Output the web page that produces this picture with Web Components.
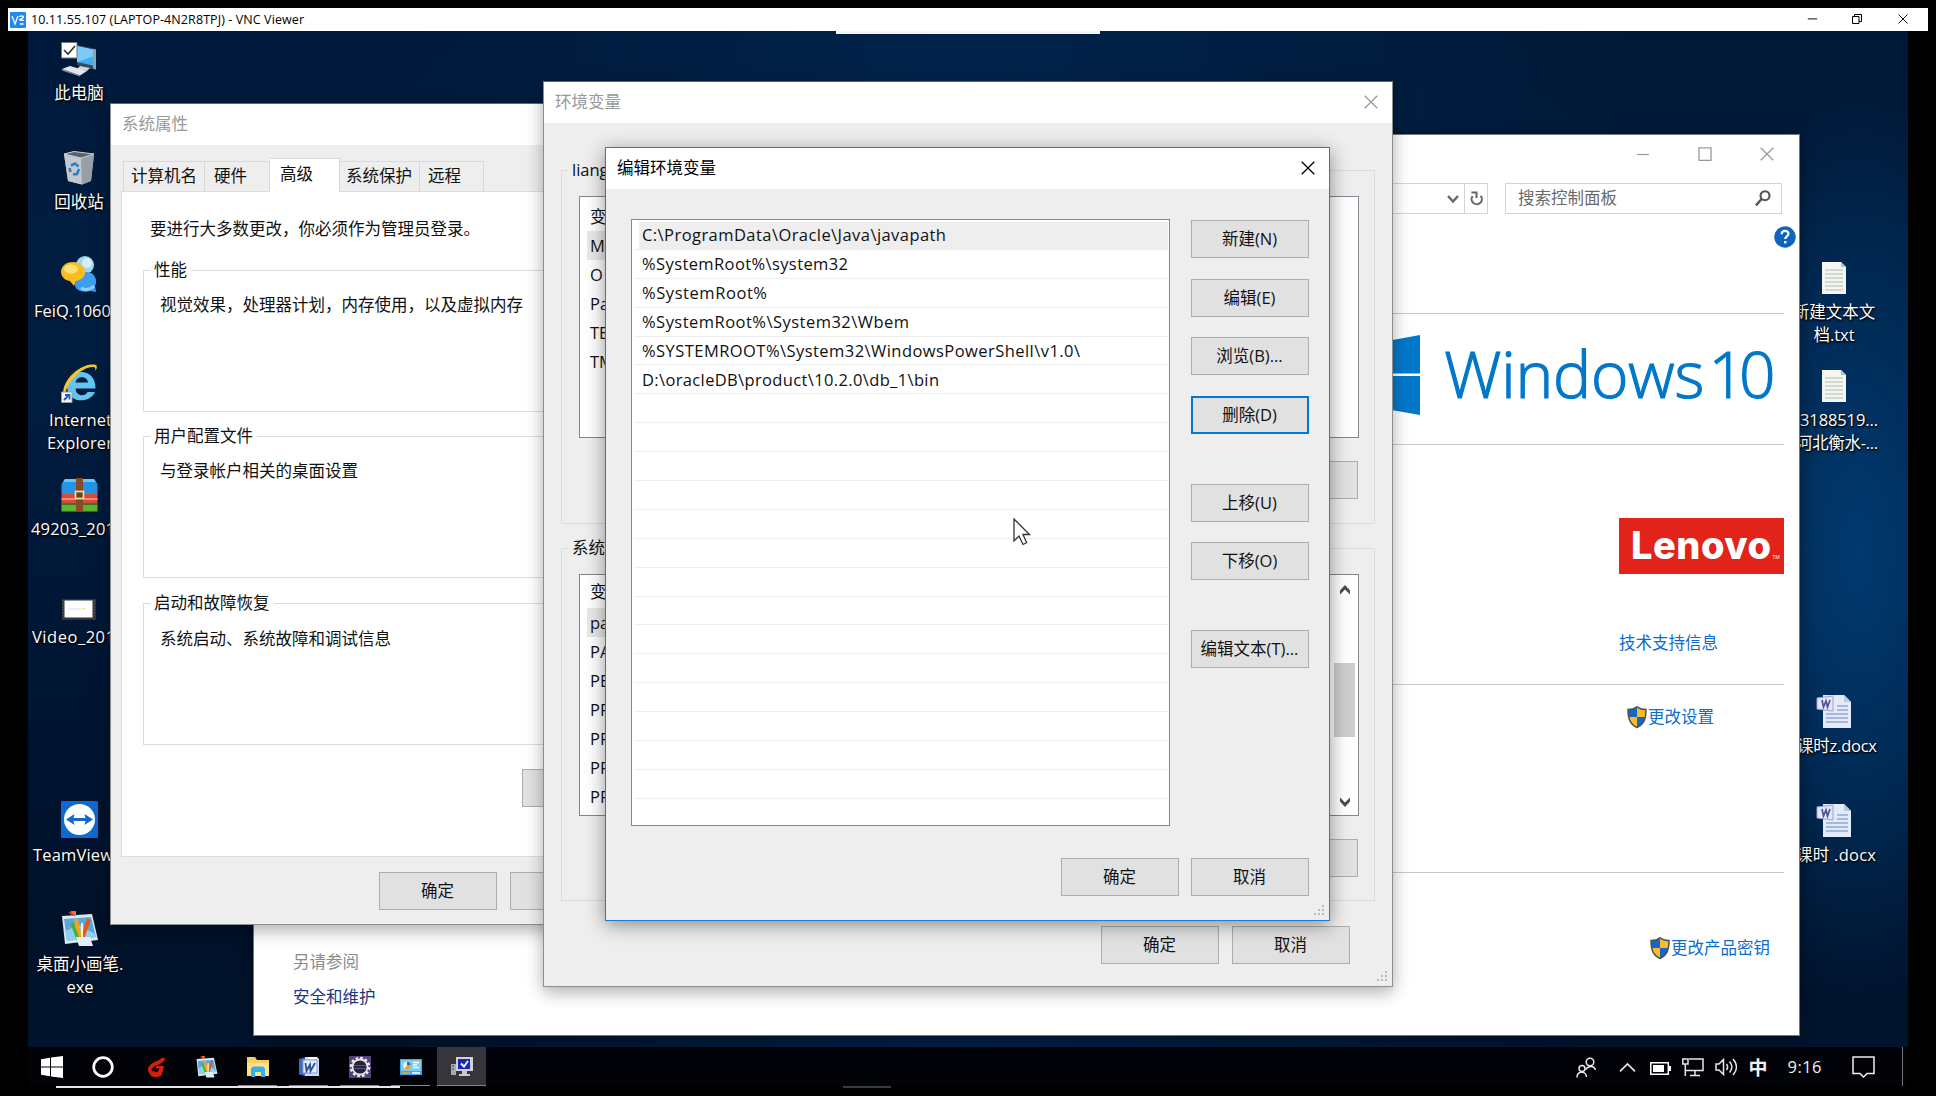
<!DOCTYPE html>
<html lang="zh-CN">
<head>
<meta charset="utf-8">
<title>VNC Viewer</title>
<style>
html,body{margin:0;padding:0;background:#000;overflow:hidden}
body{font:16.5px/24px "Open Sans","Noto Sans CJK SC",sans-serif;color:#111;width:1936px;height:1096px}
</style>
</head>
<body>
<vnc-screen></vnc-screen>
<script>
const def=(name,html,init)=>{
  const t=document.createElement('template');t.innerHTML=html;
  customElements.define(name,class extends HTMLElement{
    constructor(){super();this.attachShadow({mode:'open'}).append(t.content.cloneNode(true));}
    connectedCallback(){init&&init.call(this,this.shadowRoot);}
  });
};

/* Icon artwork, keyed by name: [viewBox, markup] */
const paint='<path d="M1 5l30 -2 6 26-33 4z" fill="#dbe9f2"/><path d="M3 8l27-2 5 20-29 4z" fill="#5aa7dc"/><path d="M4 20l14-6 16 9 1 3-29 4z" fill="#8fd0f0"/><path d="M10 0h5v5h-5z" fill="#e8762c"/><path d="M8 1l4 3" stroke="#c33" stroke-width="2"/><path d="M15 8l4 20" stroke="#f3a31c" stroke-width="4"/><path d="M11 12l6 16" stroke="#4fae3a" stroke-width="3.5"/><path d="M28 8l-7 20" stroke="#e35a20" stroke-width="4"/><path d="M21 12l0 14" stroke="#fff2c8" stroke-width="2"/><path d="M15 26h14l3 9H18z" fill="#dfeef8"/>';
const wdoc='<path d="M6 1h21l7 7v26H6z" fill="#e3ebfa"/><path d="M27 1v7h7z" fill="#b9c9e6"/><path d="M20 12h11M20 16h11M9 20h22M9 24h22M9 28h22" stroke="#93a8d4" stroke-width="1.3"/><path d="M0 4l16-2v15L0 15z" fill="#e4e6f5" stroke="#9aa2cf"/><path d="M5 6l1.500 7 2.500-6 1.500 6 2.500-7" fill="none" stroke="#4d559c" stroke-width="1.700"/>';
const shield='<path d="M10 .8C7 3 4 3.6 1 3.6 1 12 2.500 18 10 21.500 17.500 18 19 12 19 3.600 16 3.600 13 3 10 .8z" fill="#f9bb2d"/><path d="M10 1.500V11H1.500C1 9 1 6 1 3.600 4 3.600 7 3 10 1.500zM10 11h8.500C17.500 16 15 19 10 21.500z" fill="#1468c4"/><path d="M10 .8C7 3 4 3.600 1 3.600 1 12 2.500 18 10 21.500 17.500 18 19 12 19 3.600 16 3.600 13 3 10 .8z" fill="none" stroke="#4d5252" stroke-width="1.500"/>';
const txt='<path d="M1 1h19l5 5v27H1z" fill="#f4f6f4"/><path d="M20 1l0 5h5z" fill="#a9c4d8"/><path d="M4 9h18M4 13h18M4 17h18M4 21h18M4 25h18M4 29h18" stroke="#b5b7b0" stroke-width="1.200"/>';
const ICONS={
  vnc:['0 0 16 16','<rect width="16" height="16" rx="1" fill="#2089f2"/><path d="M2 4l3 8 3-8M9.500 5c0-1.500 4-1.500 4 0s-4 1.500-4 3M9.500 8.500c1-1 4-.5 4 .5M10 12h3.500" fill="none" stroke="#fff" stroke-width="1.300"/>'],
  min:['0 0 14 14','<path d="M1 7.500h12" stroke="currentColor" stroke-width="1.200"/>'],
  max:['0 0 14 14','<path d="M1 .8h12v12.600H1z" fill="none" stroke="currentColor" stroke-width="1.300"/>'],
  restore:['0 0 10 10','<path d="M.5 2.500h6.500v7H.5zM2.500 2.500v-2h7v7H7" fill="none" stroke="currentColor"/>'],
  close:['0 0 14 14','<path d="M.7 .7l12.600 12.600M13.300 .7L.7 13.300" stroke="currentColor" stroke-width="1.300"/>'],
  grip:['0 0 13 13','<path d="M10 1h2v2h-2zM10 5h2v2h-2zM6 5h2v2H6zM10 9h2v2h-2zM6 9h2v2H6zM2 9h2v2H2z" fill="#bdbdbd"/>'],
  up:['0 0 12 10','<path d="M1 9.500V5.500l5-5.500 5 5.500v4L6 4.500z" fill="#4c4c4c"/>'],
  down:['0 0 12 10','<path d="M1 .5v4l5 5.500 5-5.500v-4L6 5.500z" fill="#4c4c4c"/>'],
  chev:['0 0 12 8','<path d="M1 1l5 5.500L11 1" fill="none" stroke="#666" stroke-width="2.400"/>'],
  refresh:['0 0 14 16','<path d="M2.800 5.500A5.500 5.500 0 1 0 11.500 5.200" fill="none" stroke="#666" stroke-width="2.200"/><path d="M1.500 1.500h5.500v6" fill="none" stroke="#666" stroke-width="2.200"/>'],
  search:['0 0 16 16','<circle cx="10" cy="5.700" r="4.500" fill="none" stroke="#555" stroke-width="2.100"/><path d="M6.600 9L1 15.300" stroke="#555" stroke-width="2.500"/>'],
  help:['0 0 22 22','<circle cx="11" cy="11" r="10.700" fill="#0f65bd"/><path d="M7.700 8.300c0-4.600 6.800-4.300 6.800-.5 0 2.500-3.300 2.600-3.300 5.200" fill="none" stroke="#fff" stroke-width="2.200"/><path d="M10 15h2.400v2.400H10z" fill="#fff"/>'],
  flag:['0 0 74 80','<path d="M0 12L34 7.200V38H0zM37 6.800L74 0v38.500H37zM0 41h34v31.800L0 68zM37 41h37v39l-37-6.500z" fill="#0078c9"/>'],
  shield:['0 0 20 22',shield],
  cursor:['0 0 18 28','<path d="M1 1v22l5-5 4 8.500 3.600-1.700L10 16.500h6.500z" fill="#fff" stroke="#33333d" stroke-width="1.300"/>'],
  pc:['0 0 37 34','<path d="M16 3l19 4v21l-19-5z" fill="#3a4a58"/><path d="M16 4l16 3.500v16L16 20z" fill="#42aef0"/><path d="M16 4l16 3.500v7L16 20z" fill="#7ccbf8"/><path d="M32 7l3 .5v20l-3-1z" fill="#8fa3b3"/><path d="M19 24l10 2-3 3-10-2z" fill="#cdd6dd"/><path d="M1 27l8-3 17 5-7 4.500z" fill="#e3e6e8"/><path d="M1 27l18 6.500v1L1 28.500z" fill="#8c949a"/><path d="M.5.500h15.500v15.500H.5z" fill="#fff" stroke="#777"/><path d="M3 8l4 4L14 4" fill="none" stroke="#333" stroke-width="1.600"/>'],
  bin:['0 0 32 34','<path d="M1 3l10-2.500 20 2.500-3 27-9 3.500L5 30z" fill="#b4bcc3"/><path d="M1 3l17 4 1 26.500L5 30z" fill="#c3c9ce"/><path d="M18 7l13-4-3 27-9 3.500z" fill="#989fa6"/><path d="M1 3l10-2.500L31 3 18 7z" fill="#58636c" stroke="#c9cfd3" stroke-width="1"/><path d="M8 14.500l4-2 3.500 3M16 18l-2 5-4 .500M7.500 21l-1-4" fill="none" stroke="#2c7fc8" stroke-width="2.600"/>'],
  feiq:['0 0 38 38','<circle cx="25" cy="9" r="9" fill="#9ed7f6"/><circle cx="27" cy="7" r="5" fill="#d3effc"/><path d="M27 16c8 0 11 9 8 14l1 6-6-1c-8 2-15-1-15-6s4-13 12-13z" fill="#3f9df0"/><path d="M21 32c5 3 10 1 13-2" stroke="#8fd0fa" stroke-width="3" fill="none"/><path d="M13 6C5 6 1 11 1 16s5 9 9 9l4 5 2-5c5-1 9-4 9-9S20 6 13 6z" fill="#fbbd1e"/><ellipse cx="11" cy="13" rx="7" ry="4.500" fill="#fde27a"/>'],
  ie:['0 0 37 40','<path d="M34.500 25.500H14.500c.5 8 9.500 8.500 12 3.500h7.500C28 42 5 40 6 22 7 5 35 3 34.500 25.500zM14.500 19.500H27c-.7-7-11.500-7-12.500 0z" fill="#63c4f2"/><path d="M3 33C-2 20 20-2 35 2c2 2 0 5-1 6 1-3 0-4-2-4C22 3 5 19 4 33z" fill="#f5c62a"/><path d="M.5 29h10.500v10.500H.5z" fill="#f6f6f6" stroke="#999"/><path d="M3 37l4-4M4 32h4.500v4.500" fill="none" stroke="#1f5fb5" stroke-width="1.800"/>'],
  rar:['0 0 37 34','<path d="M4 1h29l3.500 5v10H.5V6z" fill="#2196e3"/><path d="M4 1h29l2 3H2z" fill="#6cc5f5"/><path d="M.5 16h36v9H.5z" fill="#d94a3a"/><path d="M.5 20h36v2H.5z" fill="#f08a70"/><path d="M.5 25h36v8.500H.5z" fill="#5cb531"/><path d="M.5 25h36v2H.5z" fill="#2f7d1e"/><path d="M15 0h7v33.500h-7z" fill="#8c4a24"/><rect x="14.500" y="13.500" width="8" height="7" fill="#5e4a28" stroke="#f2dfa0" stroke-width="1.700"/>'],
  video:['0 0 34 21','<path d="M0 0h34v21H0z" fill="#333"/><path d="M2.500 1.500h28v17h-28z" fill="#fff"/><path d="M6 10h13" stroke="#eee4f0" stroke-width="1.500"/><path d="M20 9.500h3" stroke="#f2e48a" stroke-width="1.500"/><path d="M32 1v19M1 1v19" stroke="#666" stroke-dasharray="1.500 1.500"/>'],
  tv:['0 0 37 37','<rect width="37" height="37" rx="1.500" fill="#0c6bd0"/><circle cx="18.500" cy="18.500" r="15.500" fill="#fff"/><path d="M5 18.500l8.500-5.500-1 4h12l-1-4 8.500 5.500-8.500 5.500 1-4h-12l1 4z" fill="#1169cc"/>'],
  paint:['0 0 38 36',paint],
  txt:['0 0 26 34',txt],
  wdoc:['0 0 35 35',wdoc],
  start:['0 0 22 22','<path d="M0 3.200l9-1.400v8.700H0zM10 1.600L22 0v10.500H10zM0 11.500h9v8.700l-9-1.400zM10 11.500h12V22l-12-1.600z" fill="#fff"/>'],
  cortana:['0 0 22 22','<circle cx="11" cy="11" r="9.300" fill="none" stroke="#fff" stroke-width="2.700"/>'],
  g:['0 0 20 22','<path d="M18.500 1C17 7 4.500 6 4 13.500c-.3 5.500 9.500 5.500 12 .5l.5-2.500h-6" fill="none" stroke="#d81e06" stroke-width="4"/><path d="M10 12h8l-1.500 7c-3 2.500-10 2.500-12 0z" fill="#d81e06"/><path d="M9 12.500c2-1 4-1 5-.5-.5 3-2 4-5 4z" fill="#000"/>'],
  folder:['0 0 22 20','<path d="M0 0h8l2 3h12v16H0z" fill="#f8cf5f"/><path d="M0 6h22v13H0z" fill="#fde28d"/><path d="M4 20v-8.500l2-2h10l2 2V20h-4v-5H8v5z" fill="#35b0e6"/>'],
  word:['0 0 20 20','<path d="M6 0h12l2 2v17H6z" fill="#cfdcf2"/><path d="M9 0h9v2H9z" fill="#fff"/><path d="M0 2l6-1.500V19l-6-1.500z" fill="#3f6cb8"/><path d="M4 3h14v13H4z" fill="#e9effa" stroke="#7d9dd4"/><path d="M6.500 6l1 8 3.500-6.500.500 6.500L16 6" fill="none" stroke="#2b569a" stroke-width="1.900"/>'],
  gear:['0 0 22 22','<path d="M0 0h22v22H0z" fill="#54407a"/><circle cx="11" cy="11" r="8.800" fill="none" stroke="#eee" stroke-width="3" stroke-dasharray="2.600 2"/><circle cx="11" cy="11" r="7.500" fill="#262338" stroke="#e3e1e8" stroke-width="1.800"/><path d="M5 9.500h12M5 12.500h12" stroke="#5d5288" stroke-width="1"/>'],
  panel:['0 0 22 16','<path d="M0 0h22v16H0z" fill="#3fa9e8"/><path d="M1 1h20v11H1z" fill="#7dcaf3"/><circle cx="7" cy="6.500" r="3.700" fill="#f6f6f6"/><path d="M7 6.500V2.800a3.700 3.700 0 0 1 3.700 3.700z" fill="#1b6fb5"/><path d="M7 6.500h3.700a3.700 3.700 0 0 1-6 3z" fill="#f39b1d"/><path d="M13 3.500h6M13 6h4M13 8.500h6" stroke="#fff" stroke-width="1.500"/><path d="M2 14h8" stroke="#f6a623" stroke-width="1.500"/><path d="M12 14h8" stroke="#fff" stroke-width="1.500"/>'],
  mypc:['0 0 22 20','<path d="M0 7h5v11H0z" fill="#a9adb2"/><path d="M1 9h2M1 12h2" stroke="#444"/><path d="M5 0h17v14H5z" fill="#cfd2d6"/><path d="M7 2h12v10H7z" fill="#1a28c0"/><path d="M10 6.500l3 3L17 4" fill="none" stroke="#fff" stroke-width="1.800"/><path d="M11 14h5v3h3v2H8v-2h3z" fill="#c5c8cc"/>'],
  people:['0 0 20 21','<g fill="none" stroke="#e8e8e8" stroke-width="1.500"><circle cx="14" cy="5" r="3.800"/><circle cx="6" cy="11.500" r="3"/><path d="M1 20.500c0-7 9-7 9.500-.500M9.500 12.500c3-4 8.500-4.500 10 .500"/></g>'],
  tup:['0 0 17 9','<path d="M1 8.300L8.500 1 16 8.300" fill="none" stroke="#e8e8e8" stroke-width="1.700"/>'],
  batt:['0 0 21 13','<path d="M.8.800h17.500v11.400H.8z" fill="none" stroke="#fff" stroke-width="1.500"/><path d="M3 3h11v7H3z" fill="#fff"/><path d="M19 4h2v5h-2z" fill="#fff"/>'],
  net:['0 0 22 19','<g fill="none" stroke="#e8e8e8" stroke-width="1.500"><path d="M7 1h14v11.500H4M13 12.500V17M8 17.500h10M.8 1H6v5H.8zM3.300 6v12"/></g>'],
  vol:['0 0 23 20','<g fill="none" stroke="#e8e8e8" stroke-width="1.500"><path d="M1 7h3l4.500-4.500v15L4 13H1zM11.500 7c1.500 2 1.500 4 0 6M14.500 4.500c3 3.500 3 7.500 0 11M18 2c4.500 5 4.500 11 0 16"/></g>'],
  note:['0 0 23 23','<path d="M1 1h21v16.500h-7L11.500 21 8 17.500H1z" fill="none" stroke="#f0f0f0" stroke-width="1.500"/>']
};

def('ui-icon','',function(r){
  const [vb,m]=ICONS[this.getAttribute('name')];const s=vb.split(' ');
  const w=this.getAttribute('w')||s[2],h=this.getAttribute('h')||s[3];
  r.innerHTML=`<style>:host{display:block;flex:none;width:${w}px;height:${h}px}svg{display:block;overflow:visible}</style><svg width="${w}" height="${h}" viewBox="${vb}" preserveAspectRatio="none">${m}</svg>`;
});

/* A single line of text whose tracking is adjusted to fill the width in "w". */
def('ui-text','<style>:host{display:block;width:max-content;white-space:pre;height:24px;line-height:24px;flex:none}</style><slot></slot>',function(){
  const w=+this.getAttribute('w');if(!w)return;
  const n=[...this.textContent].length,nat=this.getBoundingClientRect().width;
  this.style.letterSpacing=((w-nat)/Math.max(1,n-1))+'px';
});

def('ui-button','<style>:host{display:flex;box-sizing:border-box;width:118px;height:38px;flex:none;align-items:center;justify-content:center;background:#e1e1e1;border:1px solid #adadad;color:#111;padding:0 1px 1px 0}:host([focused]){border:2px solid #0078d7}</style><slot></slot>');

def('win-frame',`<style>
:host{display:flex;flex-direction:column;box-sizing:border-box;position:absolute;background:#eee;border:1px solid #8d8d8d;border-top-color:#5d6670;box-shadow:0 5px 16px rgba(0,0,0,.33)}
:host([active]){border-color:#1a7fd4;box-shadow:0 4px 18px rgba(0,0,0,.42)}
header{height:41px;box-sizing:border-box;flex:none;background:#fff;display:flex;align-items:center;justify-content:space-between;padding:0 14px 2px 11px;color:#999}
:host([active]) header{color:#000;padding-right:14px}
ui-icon{color:#999}:host([active]) ui-icon{color:#000}
main{flex:1;display:flex;flex-direction:column;min-height:0}
.grip{position:absolute;right:4px;bottom:3px}
</style><header><ui-text></ui-text><ui-icon name="close"></ui-icon></header><main><slot></slot></main><ui-icon class="grip" name="grip"></ui-icon>`,function(r){
  r.querySelector('ui-text').textContent=this.getAttribute('heading');
});

def('group-box',`<style>:host{display:flex;flex-direction:column;box-sizing:border-box;border:1px solid #dcdcdc;flex:none}
.l{margin:-13px 0 0 6px;padding:0 4px;background:var(--bg,#fff);width:max-content;height:24px}</style><div class="l"><ui-text></ui-text></div><slot></slot>`,function(r){
  r.querySelector('ui-text').textContent=this.getAttribute('legend');
});

def('var-list',`<style>:host{display:flex;box-sizing:border-box;border:1px solid #828790;background:#fff;overflow:hidden;flex:none}
.rows{flex:1;padding-left:7px}.r{height:29px;display:flex;align-items:center;padding-left:3px}.sel{background:#e9e9e9;width:300px}
.h{margin-bottom:var(--hgap,0)}
.sb{display:none;width:21px;flex-direction:column;align-items:center;margin-right:3px}:host([scroll]) .sb{display:flex}
.t{width:21px;height:74px;background:#cdcdcd;margin-top:calc(62px - var(--pt,0px))}.a{height:26px;display:flex;align-items:center}.a.d{margin-top:auto}
</style><div class="rows"></div><div class="sb"><div class="a" style="margin-top:-1px;height:27px"><ui-icon name="up" w="12" h="10"></ui-icon></div><div class="t"></div><div class="a d"><ui-icon name="down" w="12" h="10"></ui-icon></div></div>`,function(r){
  r.querySelector('.rows').innerHTML=this.getAttribute('rows').split(',').map((s,i)=>`<div class="r ${i==0?'h':i==1?'sel':''}"><ui-text>${s}</ui-text></div>`).join('');
});

def('sys-window',`<style>
:host{display:flex;flex-direction:column;box-sizing:border-box;position:absolute;left:253px;top:134px;width:1547px;height:902px;background:#fff;border:1px solid #6f7880;box-shadow:0 4px 14px rgba(0,0,0,.4)}
.cap{display:flex;justify-content:flex-end;height:38px;padding:0 1px 1px 0;box-sizing:border-box;color:#999;flex:none}.cap div{width:62px;display:flex;align-items:center;justify-content:center}
.addr{display:flex;justify-content:flex-end;gap:17px;margin-top:10px;height:31px;padding-right:17px;flex:none}
.box{box-sizing:border-box;border:1px solid #d4d4d4;display:flex;align-items:center;color:#6a6a6a}
.path{width:900px;justify-content:flex-end}.path>div{height:100%;width:22px;display:flex;align-items:center;justify-content:center}.path>.rf{border-left:1px solid #d4d4d4}
.s{width:277px;justify-content:space-between;padding:0 10px 1px 12px}
.help{height:46px;display:flex;align-items:center;justify-content:flex-end;padding-right:3px;flex:none}
section{box-sizing:border-box;border-bottom:1px solid #c8c8c8;margin:0 15px 0 30px;display:flex;flex-direction:column;align-items:flex-end;flex:none}
section.w{flex-direction:row;justify-content:flex-end;align-items:flex-start}
.word{font-weight:300;font-size:64px;line-height:70px;height:70px;color:#0078c9;-webkit-text-stroke:1.200px #0078c9}
.col{width:165px}
.lenovo{width:165px;height:56px;background:#e2231a;color:#fff;display:flex;align-items:flex-start;justify-content:flex-start}
.lenovo .b{font-family:Inter,"Open Sans",sans-serif;font-weight:800;font-size:38px;height:48px;line-height:48px;margin:3px 0 0 12px}
.lenovo small{font-size:5px;align-self:flex-end;line-height:8px;margin:0 0 13px 1px}
.link{color:#0b6cd1}.row{display:flex;align-items:center;gap:1px}
section.last{border:0;flex:1;flex-direction:row;justify-content:space-between;align-items:flex-start;margin-left:39px}
</style>
<div class="cap"><div><ui-icon name="min"></ui-icon></div><div><ui-icon name="max"></ui-icon></div><div><ui-icon name="close"></ui-icon></div></div>
<div class="addr"><div class="box path"><div><ui-icon name="chev" w="12" h="8"></ui-icon></div><div class="rf"><ui-icon name="refresh" w="13" h="15"></ui-icon></div></div>
<div class="box s"><ui-text>搜索控制面板</ui-text><ui-icon name="search"></ui-icon></div></div>
<div class="help"><ui-icon name="help"></ui-icon></div>
<section style="height:54px"></section>
<section class="w" style="height:131px"><ui-icon name="flag" style="margin:21px 24px 0 0"></ui-icon><ui-text class="word" w="260" style="margin-top:25px">Windows</ui-text><ui-text class="word" w="67" style="margin:25px 14.5px 0 4.5px">10</ui-text></section>
<section style="height:240px"><div class="col" style="margin-top:73px"><div class="lenovo"><ui-text class="b" w="140">Lenovo</ui-text><small>TM</small></div><ui-text class="link" style="margin-top:57px">技术支持信息</ui-text></div></section>
<section style="height:188px"><div class="row link" style="width:157px;margin-top:20px"><ui-icon name="shield"></ui-icon><ui-text>更改设置</ui-text></div></section>
<section class="last"><div style="margin-top:77px"><ui-text style="color:#8b8b8b">另请参阅</ui-text><ui-text style="color:#1d3584;margin-top:11px">安全和维护</ui-text></div><div class="row link" style="width:134px;margin-top:63px"><ui-icon name="shield"></ui-icon><ui-text>更改产品密钥</ui-text></div></section>`);

def('props-window',`<style>
:host{display:contents}
.tabs{display:flex;align-items:flex-end;margin:13px 0 0 11px;height:33px;flex:none}
.tab{box-sizing:border-box;height:30px;border:1px solid #d9d9d9;border-bottom:0;border-left-width:0;background:#eee;display:flex;align-items:center;padding-bottom:2px}
.tab:first-child{border-left-width:1px;margin-left:1px}
.tab.on{height:34px;margin-bottom:-1px;background:#fff;border-left-width:0;position:relative;padding-bottom:4px}
.page{box-sizing:border-box;margin:0 11px 0 10px;height:666px;border:1px solid #dcdcdc;background:#fff;padding:25px 20px 0 21px;display:flex;flex-direction:column;flex:none}
group-box{height:142px}.d{margin:11px 0 0 16px}
.foot{display:flex;gap:13px;margin:15px 0 0 268px}
</style>
<win-frame heading="系统属性" style="left:110px;top:103px;width:520px;height:822px">
<div class="tabs"><div class="tab" style="width:82px;padding-left:7px"><ui-text>计算机名</ui-text></div><div class="tab" style="width:65px;padding-left:9px"><ui-text>硬件</ui-text></div><div class="tab on" style="width:70px;padding-left:10px"><ui-text>高级</ui-text></div><div class="tab" style="width:80px;padding-left:6px"><ui-text>系统保护</ui-text></div><div class="tab" style="width:64px;padding-left:8px"><ui-text>远程</ui-text></div></div>
<div class="page"><ui-text style="margin-left:7px">要进行大多数更改，你必须作为管理员登录。</ui-text>
<group-box legend="性能" style="margin-top:29px"><ui-text class="d">视觉效果，处理器计划，内存使用，以及虚拟内存</ui-text></group-box>
<group-box legend="用户配置文件" style="margin-top:24px"><ui-text class="d">与登录帐户相关的桌面设置</ui-text></group-box>
<group-box legend="启动和故障恢复" style="margin-top:25px"><ui-text class="d" style="margin-top:12px">系统启动、系统故障和调试信息</ui-text></group-box>
<ui-button style="margin:24px 0 0 379px"></ui-button></div>
<div class="foot"><ui-button>确定</ui-button><ui-button></ui-button></div>
</win-frame>`);

def('env-window',`<style>
:host{display:contents}
group-box{--bg:#eee;margin:0 17px 0 17px}
ui-button.b{align-self:flex-end;margin-right:16px}
.foot{display:flex;justify-content:flex-end;gap:13px;margin:25px 42px 0 0}
</style>
<win-frame heading="环境变量" style="left:543px;top:81px;width:850px;height:906px">
<group-box legend="liang" style="margin-top:47px;height:354px"><var-list rows="变,M,O,Pa,TE,TM" style="margin:14px 15px 0 17px;height:242px;padding-top:5px"></var-list><ui-button class="b" style="margin-top:23px"></ui-button></group-box>
<group-box legend="系统" style="margin-top:24px;height:353px"><var-list scroll rows="变,pa,PA,PE,PR,PR,PR,PR" style="margin:14px 15px 0 17px;height:242px;padding-top:2px;--pt:2px;--hgap:2px"></var-list><ui-button class="b" style="margin-top:23px"></ui-button></group-box>
<div class="foot"><ui-button>确定</ui-button><ui-button>取消</ui-button></div>
</win-frame>`);

def('edit-window',`<style>
:host{display:contents}
.top{display:flex;gap:21px;margin:30px 0 0 25px;height:607px;flex:none}
.list{box-sizing:border-box;width:539px;border:1px solid #828790;background:#fff;padding:1px 1px 0 2px;overflow:hidden}
.row{box-sizing:border-box;height:28.900px;border-bottom:1.500px solid #eee;display:flex;align-items:center;padding:1px 0 0 8px}
.row:last-child{border:0}
.row.sel{background:linear-gradient(#eee,#eee) 5px 1px no-repeat}
.btns{display:flex;flex-direction:column;padding-top:1px}
.foot{display:flex;justify-content:flex-end;gap:12px;margin:32px 20px 0 0}
</style>
<win-frame active heading="编辑环境变量" style="left:605px;top:147px;width:725px;height:774px">
<div class="top"><div class="list"></div><div class="btns">
<ui-button>新建(N)</ui-button><ui-button style="margin-top:21px">编辑(E)</ui-button><ui-button style="margin-top:20px">浏览(B)...</ui-button><ui-button focused style="margin-top:21px">删除(D)</ui-button><ui-button style="margin-top:50px">上移(U)</ui-button><ui-button style="margin-top:20px">下移(O)</ui-button><ui-button style="margin-top:50px">编辑文本(T)...</ui-button></div></div>
<div class="foot"><ui-button>确定</ui-button><ui-button>取消</ui-button></div>
</win-frame>`,function(r){
  const rows=[['C:\\ProgramData\\Oracle\\Java\\javapath',304],['%SystemRoot%\\system32',206],['%SystemRoot%',125],['%SystemRoot%\\System32\\Wbem',267],['%SYSTEMROOT%\\System32\\WindowsPowerShell\\v1.0\\',438],['D:\\oracleDB\\product\\10.2.0\\db_1\\bin',297]];
  let h='';for(let i=0;i<21;i++)h+=`<div class="row ${i?'':'sel'}">${rows[i]?`<ui-text w="${rows[i][1]}">${rows[i][0]}</ui-text>`:''}</div>`;
  r.querySelector('.list').innerHTML=h;
});

/* Desktop shortcut: host is 100px wide; the label lines follow the icon. */
def('desk-icon',`<style>:host{position:absolute;width:100px;display:flex;flex-direction:column;align-items:center;color:#fff;text-shadow:1px 1px 2px #000,0 1px 2px #000}
.i{height:40px;display:flex;align-items:flex-end}.l{margin-top:5px;display:flex;flex-direction:column;align-items:center;width:100%}ui-text{height:23px;line-height:23px}</style><div class="i"></div><div class="l"></div>`,function(r){
  r.querySelector('.i').innerHTML=`<ui-icon name="${this.getAttribute('icon')}"></ui-icon>`;
  r.querySelector('.l').innerHTML=this.getAttribute('label').split('|').map(s=>{const[t,w,x]=s.split('~');return `<ui-text ${w?`w="${w}"`:''} ${x?`style="align-self:flex-start;margin-left:${x}px"`:''}>${t}</ui-text>`}).join('');
});

def('task-bar',`<style>
:host{position:absolute;left:0;right:0;bottom:0;height:39px;background:#010308;display:flex;justify-content:space-between}
.g{display:flex}.a{box-sizing:border-box;width:51px;display:flex;align-items:center;justify-content:center;padding-top:1px}
.n{padding-right:4px}.n:first-child{padding-right:3px}
.run{background:linear-gradient(#5b93c0,#5b93c0) center bottom/39px 1px no-repeat}.on{background:linear-gradient(#5b93c0,#5b93c0) bottom/100% 1px no-repeat,#36353b}
.tray{display:flex;align-items:center;padding-top:1px;box-sizing:border-box}
.tray ui-text{color:#f2f2f2}
.zh{font-family:"Noto Sans CJK SC",sans-serif;font-weight:700;font-size:19px}
i{width:1px;height:39px;background:#777;margin:-1px 5px 0 27px}
</style>
<div class="g"><div class="a n"><ui-icon name="start"></ui-icon></div><div class="a n"><ui-icon name="cortana"></ui-icon></div><div class="a"><ui-icon name="g" w="19" h="21"></ui-icon></div><div class="a"><ui-icon name="paint" w="22" h="22"></ui-icon></div><div class="a run"><ui-icon name="folder"></ui-icon></div><div class="a run"><ui-icon name="word"></ui-icon></div><div class="a run"><ui-icon name="gear"></ui-icon></div><div class="a run"><ui-icon name="panel"></ui-icon></div><div class="a on" style="width:49px;margin-left:1px"><ui-icon name="mypc"></ui-icon></div></div>
<div class="tray"><ui-icon name="people"></ui-icon><ui-icon name="tup" style="margin-left:23px"></ui-icon><ui-icon name="batt" style="margin:2px 0 0 14px"></ui-icon><ui-icon name="net" style="margin-left:11px"></ui-icon><ui-icon name="vol" style="margin-left:11px"></ui-icon><ui-text class="zh" style="margin:-1px 0 0 11px">中</ui-text><ui-text w="34" style="margin:-1px 0 0 20px">9:16</ui-text><ui-icon name="note" style="margin-left:30px"></ui-icon><i></i></div>`);

def('vnc-screen',`<style>
:host{display:flex;flex-direction:column;align-items:center;width:1936px;height:1096px;padding-top:8px;box-sizing:border-box;background:#000;overflow:hidden}
.bar{width:1920px;height:23px;background:#fff;display:flex;align-items:center;box-sizing:border-box;padding:0 20px 0 2px;flex:none;color:#000}
.bar ui-text{font-size:12.500px;margin-left:5px}
.ctl{display:flex;gap:35px;margin-left:auto;align-items:center}
.desk{position:relative;width:1880px;height:1055px;flex:none;overflow:hidden;background:radial-gradient(ellipse 190px 460px at 1830px 520px,#003a70 0%,rgba(0,50,98,.75) 50%,rgba(0,30,66,0) 100%),linear-gradient(90deg,rgba(0,30,66,0) 20%,rgba(0,37,79,.8) 50%,rgba(0,22,50,.3) 85%),linear-gradient(#00193a,#001e41 30%,#001634 60%,#00112a 85%,#00142e)}
.win{position:absolute;left:-28px;top:-31px;width:0;height:0}
.tab{position:absolute;left:808px;top:0;width:264px;height:3px;background:#f4f4f4;z-index:2}
.foot{display:flex;width:100%;height:2px}
.foot b{width:344px;height:2px;background:#e9e6ea;margin-left:56px}.foot u{width:48px;height:2px;background:#3a3b3d;margin-left:443px}
.cur{position:absolute;left:1013px;top:518px}
</style>
<div class="bar"><ui-icon name="vnc"></ui-icon><ui-text w="273">10.11.55.107 (LAPTOP-4N2R8TPJ) - VNC Viewer</ui-text><div class="ctl"><ui-icon name="min" w="11" h="11" style="margin-top:-2px"></ui-icon><ui-icon name="restore" style="margin:-2px 1px 0 -1px"></ui-icon><ui-icon name="close" w="10" h="10" style="margin-top:-2px"></ui-icon></div></div>
<div class="desk"><div class="tab"></div>
<div class="win">
<desk-icon icon="pc" label="此电脑" style="left:29px;top:36px"></desk-icon>
<desk-icon icon="bin" label="回收站" style="left:29px;top:145px"></desk-icon>
<desk-icon icon="feiq" label="FeiQ.1060~77~5" style="left:29px;top:254px"></desk-icon>
<desk-icon icon="ie" label="Internet~63~20|Explorer~66~18" style="left:29px;top:363px"></desk-icon>
<desk-icon icon="rar" label="49203_201~84~2" style="left:29px;top:472px"></desk-icon>
<desk-icon icon="video" label="Video_201~83~3" style="left:29px;top:580px"></desk-icon>
<desk-icon icon="tv" label="TeamView~80~4" style="left:29px;top:798px"></desk-icon>
<desk-icon icon="paint" label="桌面小画笔.|exe" style="left:30px;top:907px"></desk-icon>
<desk-icon icon="txt" label="新建文本文|档.txt" style="left:1784px;top:255px"></desk-icon>
<desk-icon icon="txt" label="3188519...~78~16|河北衡水-...~82~12" style="left:1784px;top:363px"></desk-icon>
<desk-icon icon="wdoc" label="课时z.docx~80~13" style="left:1784px;top:689px"></desk-icon>
<desk-icon icon="wdoc" label="课时 .docx~80~12" style="left:1784px;top:798px"></desk-icon>
<sys-window></sys-window><props-window></props-window><env-window></env-window><edit-window></edit-window>
<ui-icon class="cur" name="cursor"></ui-icon></div>
<task-bar></task-bar></div>
<div class="foot"><b></b><u></u></div>`);
</script>
</body>
</html>
